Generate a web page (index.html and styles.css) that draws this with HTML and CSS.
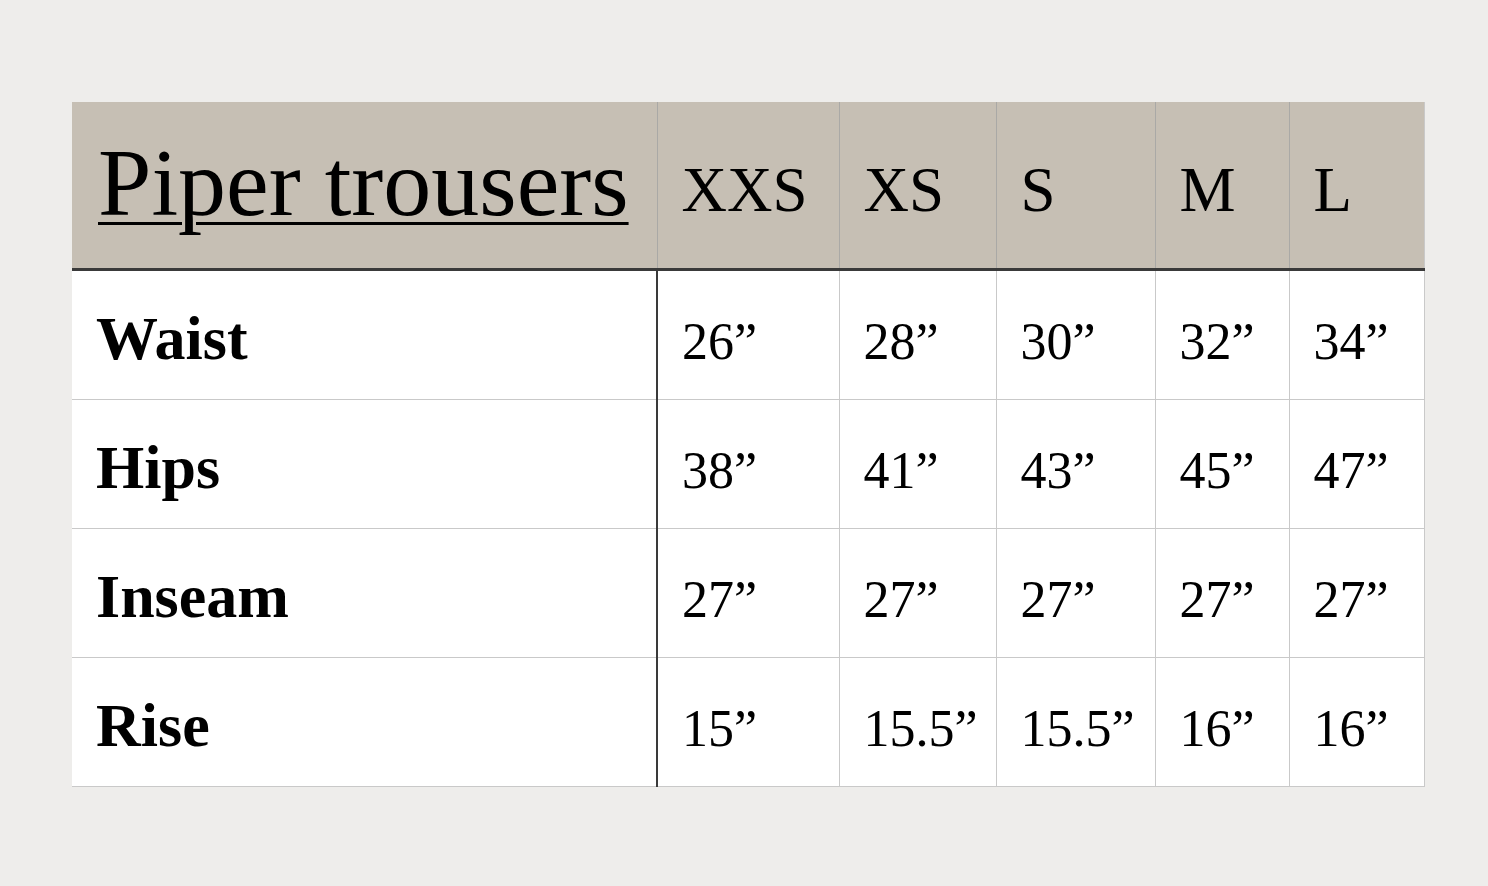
FILE: index.html
```html
<!DOCTYPE html>
<html lang="en">
<head>
<meta charset="utf-8">
<title>Piper trousers size chart</title>
<link rel="stylesheet" href="styles.css">
</head>
<body>
<div class="page">
  <table class="chart">
    <colgroup>
      <col class="c-label">
      <col class="c-xxs">
      <col class="c-xs">
      <col class="c-s">
      <col class="c-m">
      <col class="c-l">
    </colgroup>
    <thead>
      <tr>
        <th class="title"><span class="title-text">Piper trousers</span></th>
        <th class="size">XXS</th>
        <th class="size">XS</th>
        <th class="size">S</th>
        <th class="size">M</th>
        <th class="size">L</th>
      </tr>
    </thead>
    <tbody>
      <tr>
        <td class="label">Waist</td>
        <td class="num first">26”</td>
        <td class="num">28”</td>
        <td class="num">30”</td>
        <td class="num">32”</td>
        <td class="num">34”</td>
      </tr>
      <tr>
        <td class="label">Hips</td>
        <td class="num first">38”</td>
        <td class="num">41”</td>
        <td class="num">43”</td>
        <td class="num">45”</td>
        <td class="num">47”</td>
      </tr>
      <tr>
        <td class="label">Inseam</td>
        <td class="num first">27”</td>
        <td class="num">27”</td>
        <td class="num">27”</td>
        <td class="num">27”</td>
        <td class="num">27”</td>
      </tr>
      <tr>
        <td class="label">Rise</td>
        <td class="num first">15”</td>
        <td class="num">15.5”</td>
        <td class="num">15.5”</td>
        <td class="num">16”</td>
        <td class="num">16”</td>
      </tr>
    </tbody>
  </table>
</div>
</body>
</html>
```

FILE: styles.css
```css
html, body {
  margin: 0;
  padding: 0;
  background: #eeedeb;
}

body {
  font-family: "Liberation Serif", "Times New Roman", serif;
  color: #000;
}

.page {
  padding: 102px 0 0 72px;
}

.chart {
  border-collapse: collapse;
  table-layout: fixed;
  width: 1352px;
  background: #ffffff;
}

.c-label { width: 585px; }
.c-xxs { width: 182px; }
.c-xs { width: 157px; }
.c-s { width: 159px; }
.c-m { width: 134px; }
.c-l { width: 135px; }

.chart th {
  background: #c6bfb4;
  height: 156px;
  padding: 0 0 0 25px;
  text-align: left;
  vertical-align: middle;
  font-weight: normal;
  border-left: 1px solid #aaa9a6;
  border-bottom: 3px solid #3a3a3a;
  line-height: 1;
}

.chart th.title {
  border-left: none;
  padding-left: 26px;
  padding-top: 0;
  padding-bottom: 4px;
}

.title-text {
  font-size: 96px;
  text-decoration: underline;
  text-decoration-thickness: 3px;
  text-underline-offset: 7px;
}

.chart th.size {
  font-size: 63px;
  padding-top: 10px;
  padding-left: 24px;
}

.chart td {
  height: 114px;
  padding: 0 0 0 24px;
  vertical-align: middle;
  border-left: 1px solid #c9c9c9;
  border-bottom: 1px solid #c9c9c9;
  line-height: 1;
}

.chart td.label {
  border-left: none;
  font-size: 62px;
  font-weight: bold;
  padding-left: 24px;
  padding-top: 5px;
}

.chart td.num {
  font-size: 52px;
  padding-top: 14px;
}

.chart td.first {
  border-left: 2px solid #3a3a3a;
}

.chart td:last-child,
.chart th:last-child {
  border-right: 1px solid #c9c9c9;
}
```
